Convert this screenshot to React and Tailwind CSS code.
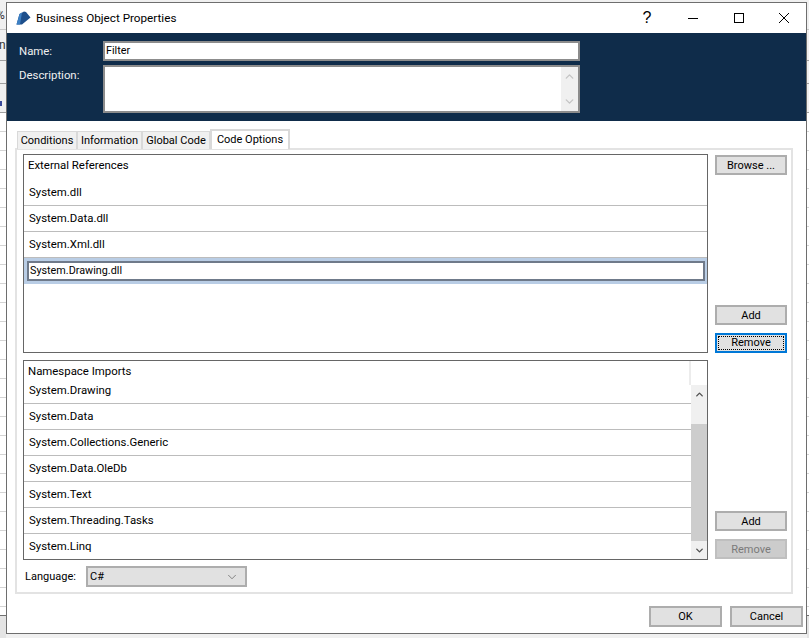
import { ChevronUp, ChevronDown } from 'lucide-react';

const references = ['System.dll', 'System.Data.dll', 'System.Xml.dll'];
const imports = ['System.Drawing', 'System.Data', 'System.Collections.Generic', 'System.Data.OleDb', 'System.Text', 'System.Threading.Tasks', 'System.Linq'];
const tabs = [
  { label: 'Conditions', width: 'w-[60px]' },
  { label: 'Information', width: 'w-[65px]' },
  { label: 'Global Code', width: 'w-[68px]' },
];

function WinButton({ children, className = '' }) {
  return (
    <div className={`h-[20px] w-[72px] border-2 border-[#adadad] bg-[#e1e1e1] flex items-center justify-center pt-[1px] text-[11px] text-black ${className}`}>
      {children}
    </div>
  );
}

// Strip of the window behind the dialog
function BackStrip({ width, glyphs }) {
  return (
    <div className={`${width} h-full shrink-0 flex flex-col overflow-hidden bg-[#f0f0f0]`}>
      <div className="h-[30px] shrink-0 border-b border-[#c8c8c8] flex items-center text-[#333333] whitespace-nowrap">{glyphs && <span className="-ml-[4px] text-[12px]">%</span>}</div>
      <div className="h-[31px] shrink-0 border-b border-[#a0a0a0] flex items-center text-[#333333] whitespace-nowrap">{glyphs && <span className="-ml-[1px] text-[12px]">n</span>}</div>
      <div className="h-[23px] shrink-0 border-b border-[#a0a0a0]"></div>
      <div className="h-[29px] shrink-0 border-b border-[#a0a0a0] flex items-end pb-[6px]">{glyphs && <div className="w-[2px] h-[5px] bg-[#3a4a9a]"></div>}</div>
      <div className="flex-1 bg-[repeating-linear-gradient(to_bottom,#ffffff_0px,#ffffff_18px,#d4d4d4_18px,#d4d4d4_19px)]"></div>
      <div className="h-[23px] shrink-0 bg-[#e4e4e4] border-t border-[#707070]"></div>
    </div>
  );
}

function App() {
  return (
    <div className="w-[809px] h-[638px] overflow-hidden flex bg-[#f0f0f0] text-[11.4px] leading-[16px] text-black" style={{ fontFamily: 'Roboto, "Liberation Sans", sans-serif' }}>
      <BackStrip width="w-[6px]" glyphs />

      {/* Dialog */}
      <div className="mt-[2px] w-[801px] h-[632px] shrink-0 border border-[#6e6e6e] bg-white flex flex-col">
        <div className="h-[30px] shrink-0 flex items-center pl-[9px]">
          <svg width="15" height="14" viewBox="0 0 15 14" className="mr-[5px]">
            <path d="M0.5 13.5 L3.5 3 L8 0.5 L10 1 L14.5 6.5 L9 11 L6 13.5 Z" fill="#1d4f8c" />
            <path d="M0.5 13.5 L3.5 3 L6 1.6 L4 13.5 Z" fill="#3d80c4" />
          </svg>
          <span className="text-[11.7px]">Business Object Properties</span>
          <div className="ml-auto flex items-center">
            <span className="w-[46px] text-center text-[16px] leading-none" style={{ fontFamily: '"Liberation Sans", sans-serif' }}>?</span>
            <div className="w-[46px] flex justify-center">
              <svg width="10" height="10" viewBox="0 0 10 10"><path d="M0 5.5H10" stroke="#000000" strokeWidth="1" /></svg>
            </div>
            <div className="w-[46px] flex justify-center">
              <svg width="10" height="10" viewBox="0 0 10 10"><rect x="0.5" y="0.5" width="9" height="9" fill="none" stroke="#000000" strokeWidth="1" /></svg>
            </div>
            <div className="w-[44px] flex justify-center">
              <svg width="10" height="10" viewBox="0 0 10 10"><path d="M0 0L10 10M10 0L0 10" stroke="#000000" strokeWidth="1" /></svg>
            </div>
          </div>
        </div>

        <div className="h-[88px] shrink-0 bg-[#0f2c4a] pl-[12px] pt-[8px] text-[#f0f0f0]">
          <div className="flex h-[20px] items-center">
            <span className="w-[84px]">Name:</span>
            <div className="w-[477px] h-[20px] bg-white border-2 border-[#8c8c8c] text-black pl-[1px] text-[10.8px]">Filter</div>
          </div>
          <div className="flex mt-[4px]">
            <span className="w-[84px] pt-[2px]">Description:</span>
            <div className="w-[477px] h-[48px] bg-white border-2 border-[#8c8c8c] flex justify-end">
              <div className="w-[17px] h-full bg-[#f0f0f0] flex flex-col justify-between items-center py-[3px] text-[#c4c4c4]">
                <ChevronUp size={13} strokeWidth={2.5} />
                <ChevronDown size={13} strokeWidth={2.5} />
              </div>
            </div>
          </div>
        </div>

        <div className="flex-1 px-[8px] pt-[10px] flex flex-col">
          <div className="flex h-[18px] pl-[2px] items-end relative z-10 -mb-[1px] text-[11px]">
            {tabs.map((tab) => (
              <div key={tab.label} className={`${tab.width} h-[18px] pt-[1px] bg-[#f0f0f0] border border-b-0 border-[#d9d9d9] flex items-center justify-center`}>{tab.label}</div>
            ))}
            <div className="w-[80px] h-[20px] bg-white border-2 border-b-0 border-[#d9d9d9] flex items-center justify-center -mt-[2px]">Code Options</div>
          </div>

          <div className="w-[778px] h-[446px] border-2 border-[#e3e3e3] pl-[6px] pt-[4px] flex flex-col">
            <div className="flex gap-[7px]">
              <div className="w-[685px] h-[199px] border border-[#666666] bg-white">
                <div className="h-[25px] pl-[4px] pt-[2px]">External References</div>
                {references.map((name) => (
                  <div key={name} className="h-[26px] pl-[5px] pb-[2px] border-b border-[#bcbcbc] flex items-center">{name}</div>
                ))}
                <div className="h-[26px] bg-[#b9cde5] pl-[3px] pr-[2px] pt-[3px]">
                  <div className="w-full h-[20px] bg-white border-2 border-[#6f7a8a] flex items-center pl-[1px] text-[10.8px]">System.Drawing.dll</div>
                </div>
              </div>
              <div className="w-[72px] flex flex-col pt-[1px]">
                <WinButton>Browse ...</WinButton>
                <WinButton className="mt-[130px]">Add</WinButton>
                <div className="mt-[8px] h-[20px] w-[72px] border-2 border-[#0078d7] bg-[#e1e1e1] p-[1px] text-[11px]">
                  <div className="h-full border border-dotted border-black flex items-center justify-center">Remove</div>
                </div>
              </div>
            </div>

            <div className="flex gap-[7px] mt-[7px]">
              <div className="w-[685px] h-[200px] border border-[#666666] bg-white flex">
                <div className="w-[667px]">
                  <div className="h-[17px] pl-[4px] pt-[2px]">Namespace Imports</div>
                  {imports.map((name, i) => (
                    <div key={name} className={`h-[26px] pl-[5px] pb-[2px] flex items-center ${i < imports.length - 1 ? 'border-b border-[#bcbcbc]' : ''}`}>{name}</div>
                  ))}
                </div>
                <div className="w-[16px] flex flex-col">
                  <div className="h-[24px] w-[18px] -ml-[2px] shrink-0 border-l-2 border-[#ececec] bg-white"></div>
                  <div className="h-[18px] bg-[#f0f0f0] flex items-center justify-center text-[#505050]"><ChevronUp size={11} strokeWidth={3} /></div>
                  <div className="h-[21px] bg-[#f0f0f0]"></div>
                  <div className="flex-1 bg-[#cdcdcd]"></div>
                  <div className="h-[18px] bg-[#f0f0f0] flex items-center justify-center text-[#505050]"><ChevronDown size={11} strokeWidth={3} /></div>
                </div>
              </div>
              <div className="w-[72px] flex flex-col pt-[151px]">
                <WinButton>Add</WinButton>
                <div className="mt-[8px] h-[20px] w-[72px] border-2 border-[#bfbfbf] bg-[#cccccc] flex items-center justify-center pt-[1px] text-[11px] text-[#7a7a7a]">Remove</div>
              </div>
            </div>

            <div className="flex items-center mt-[6px] pl-[2px] text-[11px]">
              <span className="w-[61px] pt-[1px]">Language:</span>
              <div className="w-[161px] h-[21px] border-2 border-[#adadad] bg-[#e1e1e1] flex items-center justify-between pl-[2px] pr-[6px]">
                <span>C#</span>
                <ChevronDown size={14} strokeWidth={1} className="text-[#404040]" />
              </div>
            </div>
          </div>

          <div className="flex justify-end gap-[8px] mt-[12px] -mr-[5px] text-[11px]">
            <div className="w-[73px] h-[21px] border-2 border-[#adadad] bg-[#e1e1e1] flex items-center justify-center">OK</div>
            <div className="w-[73px] h-[21px] border-2 border-[#adadad] bg-[#e1e1e1] flex items-center justify-center">Cancel</div>
          </div>
        </div>
      </div>

      <BackStrip width="w-[2px]" />
    </div>
  );
}

export default App;
